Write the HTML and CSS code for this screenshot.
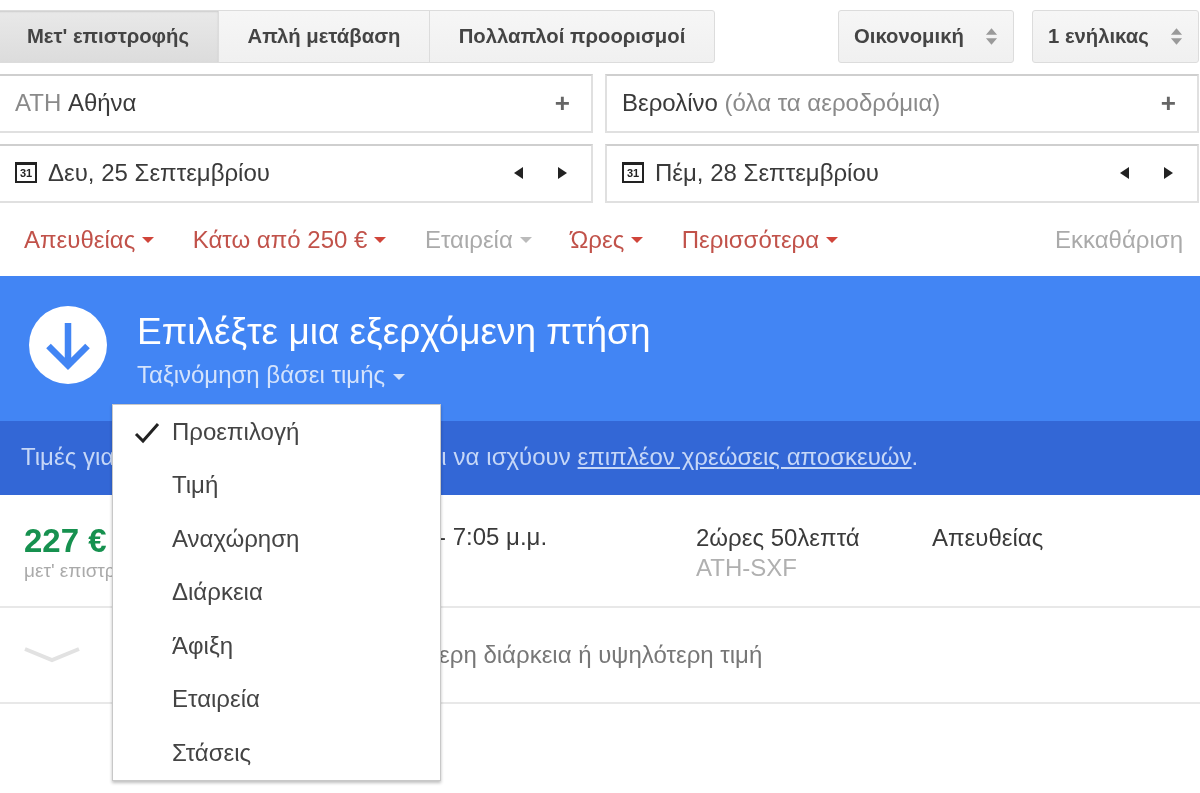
FILE: index.html
```html
<!DOCTYPE html>
<html lang="el">
<head>
<meta charset="utf-8">
<title>Πτήσεις</title>
<link rel="stylesheet" href="styles.css">
</head>
<body>
<div class="page">
  <section class="search">
    <div class="toolbar">
      <div class="tabs">
        <button class="tab tab-active">Μετ' επιστροφής</button>
        <button class="tab tab-one">Απλή μετάβαση</button>
        <button class="tab tab-multi">Πολλαπλοί προορισμοί</button>
      </div>
      <div class="selects">
        <button class="select select-class">Οικονομική
          <svg class="updown" viewBox="0 0 14 20"><path d="M7 1l6 7H1zM7 19l-6-7h12z"/></svg>
        </button>
        <button class="select select-people">1 ενήλικας
          <svg class="updown" viewBox="0 0 14 20"><path d="M7 1l6 7H1zM7 19l-6-7h12z"/></svg>
        </button>
      </div>
    </div>
    <div class="fields">
      <div class="field"><span><span class="muted">ATH</span> Αθήνα</span><span class="plus">+</span></div>
      <div class="field"><span>Βερολίνο <span class="muted">(όλα τα αεροδρόμια)</span></span><span class="plus">+</span></div>
      <div class="field date">
        <span class="date-label"><span class="cal"><span class="cal-num">31</span></span>Δευ, 25 Σεπτεμβρίου</span>
        <span class="arrows"><i class="arr-left"></i><i class="arr-right"></i></span>
      </div>
      <div class="field date">
        <span class="date-label"><span class="cal"><span class="cal-num">31</span></span>Πέμ, 28 Σεπτεμβρίου</span>
        <span class="arrows"><i class="arr-left"></i><i class="arr-right"></i></span>
      </div>
    </div>
    <div class="filters">
      <a class="filter">Απευθείας<i class="caret"></i></a>
      <a class="filter">Κάτω από 250 €<i class="caret"></i></a>
      <a class="filter filter-off">Εταιρεία<i class="caret"></i></a>
      <a class="filter">Ώρες<i class="caret"></i></a>
      <a class="filter">Περισσότερα<i class="caret"></i></a>
      <a class="clear">Εκκαθάριση</a>
    </div>
  </section>

  <section class="banner">
    <div class="circle">
      <svg viewBox="0 0 78 78" width="78" height="78"><path d="M39 17v42M19.500 40l19.500 19.500L58.500 40" fill="none" stroke="#4285f4" stroke-width="6.500"/></svg>
    </div>
    <div class="banner-text">
      <h1 class="title">Επιλέξτε μια εξερχόμενη πτήση</h1>
      <div class="sort">Ταξινόμηση βάσει τιμής<i class="caret caret-light"></i></div>
    </div>
  </section>
  <div class="notice">Τιμές για όλους τους πελάτες. Ενδέχεται να ισχύουν <a class="notice-link">επιπλέον χρεώσεις αποσκευών</a>.</div>

  <div class="result">
    <div class="price-col">
      <div class="price">227 €</div>
      <div class="price-note">μετ' επιστροφής</div>
    </div>
    <div class="times">2:15 μ.μ. - 7:05 μ.μ.</div>
    <div class="duration">2ώρες 50λεπτά<div class="route">ATH-SXF</div></div>
    <div class="stops">Απευθείας</div>
  </div>
  <div class="more">
    <svg class="chevron" viewBox="0 0 56 18"><path d="M1 3l27 11L55 3" fill="none" stroke="#e2e2e2" stroke-width="4"/></svg>
    <span class="more-text">Άλλες πτήσεις με μεγαλύτερη διάρκεια ή υψηλότερη τιμή</span>
  </div>

  <ul class="menu">
    <li class="menu-item">
      <svg class="check" viewBox="0 0 28 24"><path d="M3 13l7 7L25 3" fill="none" stroke="#222" stroke-width="3"/></svg>Προεπιλογή
    </li>
    <li class="menu-item">Τιμή</li>
    <li class="menu-item">Αναχώρηση</li>
    <li class="menu-item">Διάρκεια</li>
    <li class="menu-item">Άφιξη</li>
    <li class="menu-item">Εταιρεία</li>
    <li class="menu-item">Στάσεις</li>
  </ul>
</div>
</body>
</html>
```
FILE: styles.css
```css
* { box-sizing: border-box; }
html, body { margin: 0; height: 100%; }
body { background: #fff; overflow: hidden; font-family: "Liberation Sans", Arial, sans-serif; color: #3a3a3a; }
.page { position: relative; width: 1200px; height: 793px; overflow: hidden; filter: blur(0.45px); }

.search { height: 276px; padding-top: 10px; }
.toolbar { display: flex; justify-content: space-between; height: 53px; margin-left: -2px; padding-right: 1px; }
.tabs { display: flex; }
.tab, .select {
  font: bold 20.300px "Liberation Sans", Arial, sans-serif;
  color: #444;
  background: linear-gradient(#f6f6f6, #f0f0f0);
  border: 1px solid #dcdcdc;
  padding: 0;
  height: 53px;
}
.tab { margin-left: -1px; }
.tab-active { width: 222px; background: linear-gradient(#e9e9e9, #dcdcdc); box-shadow: inset 0 1px 2px #ccc; }
.tab-one { width: 212px; }
.tab-multi { width: 286px; border-radius: 0 3px 3px 0; }
.selects { display: flex; gap: 18px; }
.select { display: flex; align-items: center; justify-content: space-between; border-radius: 3px; padding: 0 15px 0 15px; }
.select-class { width: 176px; }
.select-people { width: 167px; }
.updown { width: 13px; height: 19px; fill: #9a9a9a; }

.fields { display: grid; grid-template-columns: 595px 594px; column-gap: 12px; row-gap: 11px; margin: 11px 0 0 -2px; }
.field {
  height: 59px; display: flex; align-items: center; justify-content: space-between;
  border: 2px solid #e0e0e0; border-top-color: #cfcfcf;
  font-size: 24px; padding: 0 21px 2px 15px; background: #fff;
}
.muted { color: #8a8a8a; }
.plus { font-weight: bold; font-size: 26px; color: #666; line-height: 1; }
.date { padding-right: 24px; }
.date-label { display: flex; align-items: center; gap: 11px; }
.cal { width: 22px; height: 21px; border: 2px solid #222; border-top-width: 3px; display: flex; align-items: center; justify-content: center; }
.cal-num { font-size: 11px; font-weight: bold; line-height: 1; color: #222; }
.arrows { display: flex; gap: 35px; }
.arr-left, .arr-right { width: 0; height: 0; border: 6px solid transparent; border-left-width: 0; border-right-width: 0; }
.arr-left { border-left: 0; border-right: 9px solid #222; }
.arr-right { border-right: 0; border-left: 9px solid #222; }

.filters { display: flex; align-items: center; gap: 38.500px; margin-top: 20px; padding: 0 17px 2px 24px; height: 35px; font-size: 24px; }
.filter { color: #c1524a; display: flex; align-items: center; white-space: nowrap; }
.filter-off { color: #aaa; }
.filter-off .caret { border-top-color: #bbb; }
.clear { margin-left: auto; color: #aaa; }
.caret { display: inline-block; width: 0; height: 0; margin-left: 7px; border: 6px solid transparent; border-bottom-width: 0; border-top: 6px solid #d0453a; }
.caret-light { border-top-color: #d4e3fc; vertical-align: 3px; margin-left: 8px; }

.banner { height: 145px; background: #4285f4; display: flex; align-items: flex-start; padding: 30px 0 0 29px; color: #fff; }
.circle { width: 78px; height: 78px; border-radius: 50%; background: #fff; flex: none; }
.banner-text { margin-left: 30px; }
.title { margin: 3px 0 0; font-weight: normal; font-size: 37px; line-height: 46px; white-space: nowrap; }
.sort { font-size: 24px; line-height: 30px; color: #d4e3fc; margin-top: 5px; }
.notice { height: 74px; background: #3367d6; color: #c6d7f7; font-size: 24px; line-height: 72px; padding-left: 21px; white-space: nowrap; word-spacing: 0.250px; }
.notice-link { text-decoration: underline; }

.result { height: 113px; border-bottom: 2px solid #e8e8e8; display: grid; grid-template-columns: 313px 359px 236px 1fr; padding: 26px 0 0 24px; font-size: 24px; }
.price { font-size: 33px; font-weight: bold; color: #16914f; line-height: 40px; }
.price-note { font-size: 19px; color: #aaa; line-height: 20px; }
.times { padding-top: 2px; }
.duration { padding-top: 2px; line-height: 30px; }
.route { color: #b0b0b0; }
.stops { padding-top: 2px; line-height: 30px; }
.more { height: 96px; border-bottom: 2px solid #e8e8e8; display: flex; align-items: center; padding-left: 24px; gap: 86px; color: #777; font-size: 24px; }
.chevron { width: 56px; height: 18px; flex: none; }
.more-text { white-space: nowrap; }

.menu {
  position: absolute; left: 112px; top: 404px; width: 329px; height: 377px;
  margin: 0; padding: 1px 0 0; list-style: none; background: #fff;
  border: 1px solid #c8c8c8; box-shadow: 0 2px 3px rgba(0,0,0,.25);
  display: flex; flex-direction: column;
}
.menu-item { position: relative; height: 53.600px; line-height: 51.600px; padding-left: 59px; font-size: 24px; color: #444; }
.check { position: absolute; left: 20px; top: 15px; width: 28px; height: 24px; }
```
